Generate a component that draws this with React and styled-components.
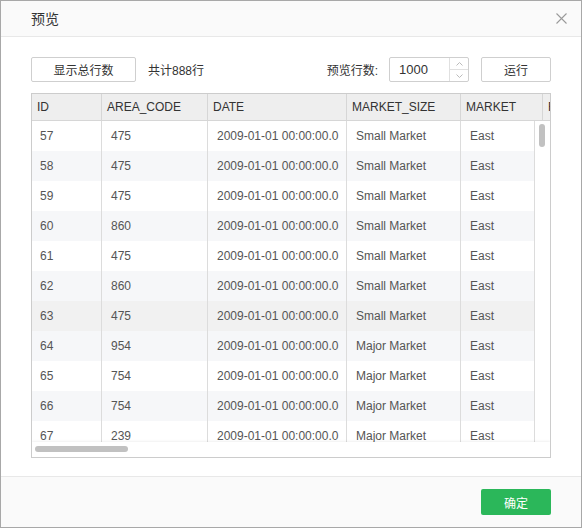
import React from "react"
import styled, { createGlobalStyle } from "styled-components"

const GlobalStyle = createGlobalStyle`
  html, body {
    margin: 0;
    padding: 0;
    background: #fff;
  }
  * {
    box-sizing: border-box;
  }
`

const FONT = `"Liberation Sans", Arial, "Noto Sans CJK SC", sans-serif`

const rows = [
  ["57", "475", "Small Market"],
  ["58", "475", "Small Market"],
  ["59", "475", "Small Market"],
  ["60", "860", "Small Market"],
  ["61", "475", "Small Market"],
  ["62", "860", "Small Market"],
  ["63", "475", "Small Market"],
  ["64", "954", "Major Market"],
  ["65", "754", "Major Market"],
  ["66", "754", "Major Market"],
  ["67", "239", "Major Market"],
]

const headCols = [
  { label: "ID", width: 70 },
  { label: "AREA_CODE", width: 106 },
  { label: "DATE", width: 139 },
  { label: "MARKET_SIZE", width: 114 },
  { label: "MARKET", width: 82 },
  { label: "REGION", width: 80 },
]

const bodyWidths = [70, 106, 139, 114, 74]

const App = () => (
  <>
    <GlobalStyle />
    <Dialog>
      <Header>
        <Title>预览</Title>
        <CloseButton aria-label="close">
          <svg width="11" height="11" viewBox="0 0 11 11">
            <path d="M0.5 0.5 L10.5 10.5 M10.5 0.5 L0.5 10.5" stroke="#9a9a9a" strokeWidth="1.1" fill="none" />
          </svg>
        </CloseButton>
      </Header>

      <Content>
        <Toolbar>
          <Button $width={105}>显示总行数</Button>
          <Count>共计888行</Count>
          <Spacer />
          <Label>预览行数:</Label>
          <NumberInput>
            <NumberValue>1000</NumberValue>
            <Spinner>
              <SpinHalf>
                <svg width="7" height="4" viewBox="0 0 7 4">
                  <path d="M0.5 3.5 L3.5 0.5 L6.5 3.5" stroke="#bbb" fill="none" />
                </svg>
              </SpinHalf>
              <SpinHalf $bottom>
                <svg width="7" height="4" viewBox="0 0 7 4">
                  <path d="M0.5 0.5 L3.5 3.5 L6.5 0.5" stroke="#bbb" fill="none" />
                </svg>
              </SpinHalf>
            </Spinner>
          </NumberInput>
          <Button $width={70}>运行</Button>
        </Toolbar>

        <Table>
          <HeadRow>
            {headCols.map(c => (
              <HeadCell key={c.label} $width={c.width}>{c.label}</HeadCell>
            ))}
          </HeadRow>
          <BodyArea>
            <Rows>
              {rows.map(([id, code, size], i) => (
                <Row key={id} $striped={i % 2 === 1} $hover={id === "63"}>
                  <Cell $width={bodyWidths[0]} $pad={8}>{id}</Cell>
                  <Cell $width={bodyWidths[1]}>{code}</Cell>
                  <Cell $width={bodyWidths[2]}>2009-01-01 00:00:00.0</Cell>
                  <Cell $width={bodyWidths[3]}>{size}</Cell>
                  <Cell $width={bodyWidths[4]}>East</Cell>
                </Row>
              ))}
            </Rows>
            <VTrack>
              <VThumb />
            </VTrack>
          </BodyArea>
          <HTrack>
            <HThumb />
          </HTrack>
        </Table>
      </Content>

      <Footer>
        <PrimaryButton>确定</PrimaryButton>
      </Footer>
    </Dialog>
  </>
)

export default App

const Dialog = styled.div`
  width: 582px;
  height: 528px;
  border: 1px solid #a8a8a8;
  background: #fff;
  display: flex;
  flex-direction: column;
  font-family: ${FONT};
  color: #333;
`

const Header = styled.div`
  height: 36px;
  flex: none;
  display: flex;
  align-items: center;
  justify-content: space-between;
  padding: 0 12px 0 30px;
  background: #fafafa;
  border-bottom: 1px solid #e8e8e8;
`

const Title = styled.div`
  font-size: 14px;
  color: #333;
  padding-bottom: 1px;
`

const CloseButton = styled.div`
  width: 16px;
  height: 16px;
  display: flex;
  align-items: center;
  justify-content: center;
`

const Content = styled.div`
  flex: 1;
  padding: 20px 30px 0;
`

const Toolbar = styled.div`
  height: 25px;
  display: flex;
  align-items: center;
  margin-bottom: 11px;
`

const Button = styled.div`
  width: ${p => p.$width}px;
  height: 25px;
  border: 1px solid #cfcfcf;
  border-radius: 2px;
  background: #fff;
  display: flex;
  align-items: center;
  justify-content: center;
  font-size: 12px;
  color: #333;
`

const Count = styled.div`
  margin-left: 12px;
  font-size: 12px;
  color: #333;
`

const Spacer = styled.div`
  flex: 1;
`

const Label = styled.div`
  font-size: 12px;
  color: #333;
  margin-right: 11px;
`

const NumberInput = styled.div`
  width: 80px;
  height: 25px;
  border: 1px solid #cfcfcf;
  border-radius: 2px;
  display: flex;
  margin-right: 12px;
`

const NumberValue = styled.div`
  flex: 1;
  padding-left: 9px;
  display: flex;
  align-items: center;
  font-size: 13px;
  color: #333;
`

const Spinner = styled.div`
  width: 19px;
  border-left: 1px solid #e0e0e0;
  display: flex;
  flex-direction: column;
`

const SpinHalf = styled.div`
  flex: 1;
  display: flex;
  align-items: center;
  justify-content: center;
  border-top: ${p => (p.$bottom ? "1px solid #e0e0e0" : "none")};
`

const Table = styled.div`
  width: 520px;
  height: 365px;
  border: 1px solid #cccccc;
  display: flex;
  flex-direction: column;
  overflow: hidden;
`

const HeadRow = styled.div`
  height: 27px;
  flex: none;
  display: flex;
  background: #eeeeee;
  border-bottom: 1px solid #d6d6d6;
  overflow: hidden;
`

const HeadCell = styled.div`
  flex: none;
  width: ${p => p.$width}px;
  padding-left: 5px;
  display: flex;
  align-items: center;
  border-right: 1px solid #d6d6d6;
  font-size: 12px;
  color: #333;
  white-space: nowrap;
`

const BodyArea = styled.div`
  flex: 1;
  display: flex;
  min-height: 0;
`

const Rows = styled.div`
  flex: 1;
  overflow: hidden;
`

const Row = styled.div`
  height: 30px;
  display: flex;
  background: ${p => (p.$hover ? "#f1f1f1" : p.$striped ? "#f6f7f9" : "#fff")};
`

const Cell = styled.div`
  flex: none;
  width: ${p => p.$width}px;
  padding-left: ${p => p.$pad || 9}px;
  display: flex;
  align-items: center;
  border-right: 1px solid #dcdcdc;
  font-size: 12px;
  color: #555;
  white-space: nowrap;
`

const VTrack = styled.div`
  width: 15px;
  flex: none;
  background: #fff;
  padding: 3px 0 0 4px;
`

const VThumb = styled.div`
  width: 6px;
  height: 23px;
  border-radius: 3px;
  background: #c1c1c1;
`

const HTrack = styled.div`
  height: 15px;
  flex: none;
  background: #fff;
  box-shadow: 0 -1px 2px rgba(0, 0, 0, 0.06);
  padding: 4px 0 0 3px;
`

const HThumb = styled.div`
  width: 93px;
  height: 6px;
  border-radius: 3px;
  background: #c1c1c1;
`

const Footer = styled.div`
  height: 51px;
  flex: none;
  border-top: 1px solid #e8e8e8;
  background: #fafafa;
  display: flex;
  justify-content: flex-end;
  padding: 12px 30px 0 0;
`

const PrimaryButton = styled.div`
  width: 70px;
  height: 26px;
  border-radius: 2px;
  background: #2bb75a;
  color: #fff;
  font-size: 12px;
  display: flex;
  align-items: center;
  justify-content: center;
`
